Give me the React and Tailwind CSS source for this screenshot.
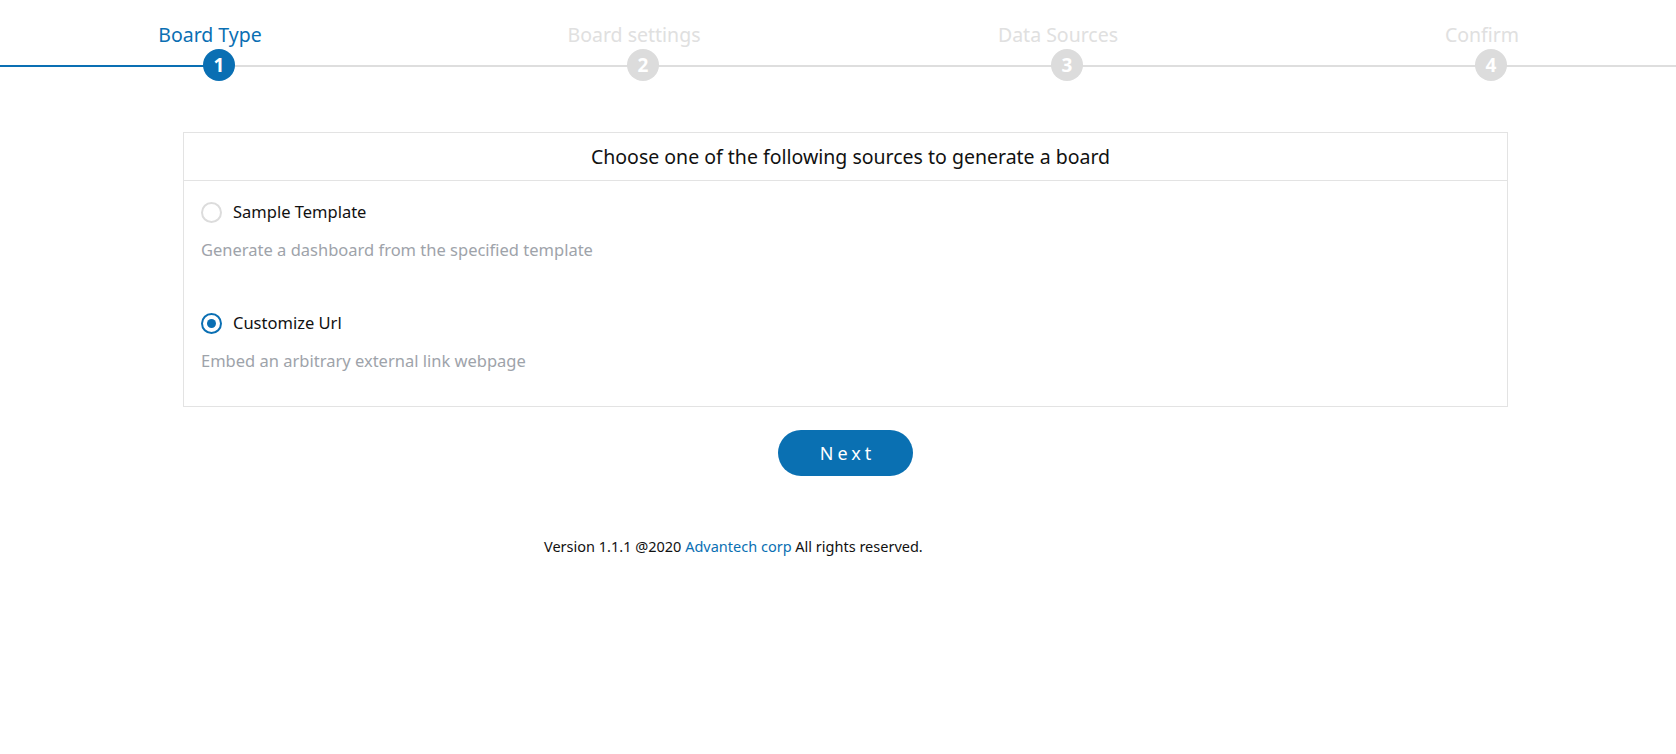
import React from 'react';

const steps = ['Board Type', 'Board settings', 'Data Sources', 'Confirm'];

const Stepper = ({ current }) => (
  <div className="relative h-[84px] overflow-hidden">
    {/* track line under the step circles */}
    <div className="absolute left-0 right-0 top-[65px] h-[2px] bg-[#dedede]" />
    <div className="absolute left-0 top-[65px] h-[2px] w-[219px] bg-[#0a6fb3]" />
    <div className="relative flex pl-[7px]">
      {steps.map((label, idx) => {
        const active = idx === current;
        return (
          <div key={label} className="flex w-[424px] shrink-0 flex-col items-center pt-[23px]">
            <span
              className={`-ml-[18px] text-[19.5px] leading-[24px] ${active ? 'text-[#0a6fb3]' : 'text-[#e0e0e0]'}`}
            >
              {label}
            </span>
            <div
              className={`mt-[2px] flex h-[32px] w-[32px] items-center justify-center rounded-full text-[19px] font-bold text-white ${active ? 'bg-[#0a6fb3]' : 'bg-[#dcdcdc]'}`}
            >
              {idx + 1}
            </div>
          </div>
        );
      })}
    </div>
  </div>
);

const Radio = ({ checked }) => (
  <div
    className={`flex h-[21px] w-[21px] items-center justify-center rounded-full border-2 ${checked ? 'border-[#0a6fb3]' : 'border-[#dcdcdc]'}`}
  >
    {checked && <div className="h-[9px] w-[9px] rounded-full bg-[#0a6fb3]" />}
  </div>
);

const Option = ({ title, desc, checked, className }) => (
  <div className={className}>
    <div className="flex h-[24px] items-center">
      <Radio checked={checked} />
      <span className="ml-[11px] text-[16.5px] leading-[24px] text-[#111]">{title}</span>
    </div>
    <p className="mt-[14px] text-[16.5px] leading-[24px] text-[#9ea3aa]">{desc}</p>
  </div>
);

export default function App() {
  return (
    <div className="min-h-screen bg-white" style={{ fontFamily: '"Noto Sans", "Open Sans", sans-serif' }}>
      <Stepper current={0} />

      <div className="ml-[183px] mt-[48px] w-[1325px]">
        {/* Source card */}
        <div className="border border-[#e3e3e3]">
          <div className="flex h-[48px] items-center justify-center border-b border-[#e3e3e3] pl-[10px]">
            <h2 className="text-[19.5px] text-[#111]">Choose one of the following sources to generate a board</h2>
          </div>
          <div className="px-[17px] pb-[33px] pt-[19px]">
            <Option title="Sample Template" desc="Generate a dashboard from the specified template" />
            <Option
              className="mt-[49px]"
              checked
              title="Customize Url"
              desc="Embed an arbitrary external link webpage"
            />
          </div>
        </div>

        <div className="mt-[23px] flex justify-center">
          <button className="h-[46px] w-[135px] rounded-full bg-[#0a70b2] pl-[4px] text-[18px] tracking-[4px] text-white">
            Next
          </button>
        </div>
      </div>

      {/* Footer */}
      <p className="ml-[544px] mt-[60px] text-[14.5px] leading-[20px] text-[#111]">
        Version 1.1.1 @2020 <span className="text-[#0a6fb3]">Advantech corp</span> All rights reserved.
      </p>
    </div>
  );
}
